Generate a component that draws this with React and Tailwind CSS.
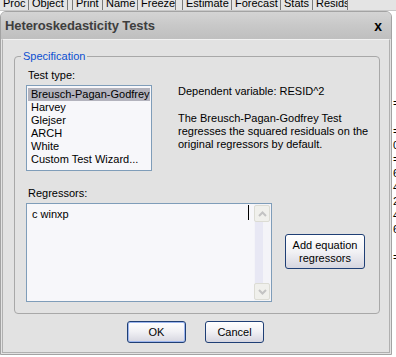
import React from "react";

const tb = [
  ["Proc", 29],
  ["Object", 39],
  ["", 5],
  ["Print", 30],
  ["Name", 35],
  ["Freeze", 38],
  ["", 7],
  ["Estimate", 49],
  ["Forecast", 49],
  ["Stats", 32],
  ["Resids", 35],
];

const items = ["Breusch-Pagan-Godfrey", "Harvey", "Glejser", "ARCH", "White", "Custom Test Wizard..."];

function Chevron({ up }) {
  return (
    <svg width="9" height="6" viewBox="0 0 9 6">
      <path
        d={up ? "M1 5 L4.5 1.5 L8 5" : "M1 1 L4.5 4.5 L8 1"}
        fill="none"
        stroke="#c3c3c3"
        strokeWidth="2"
      />
    </svg>
  );
}

export default function App() {
  return (
    <div
      className="w-[396px] h-[357px] bg-white overflow-hidden flex flex-col text-[11px] text-black"
      style={{ fontFamily: '"Liberation Sans", Arial, sans-serif' }}
    >
      {/* toolbar of background window */}
      <div className="h-[11px] shrink-0 overflow-hidden bg-[#e4e4e4] border-b border-[#c8c8c8]">
        <div className="flex -mt-[5px] h-[16px]">
          {tb.map(([t, w], i) => (
            <div
              key={i}
              className="h-[16px] leading-[16px] pl-[3px] border-r border-[#7a7a7a] whitespace-nowrap overflow-hidden"
              style={{ width: w }}
            >
              {t}
            </div>
          ))}
        </div>
      </div>

      <div className="flex flex-1">
        {/* dialog */}
        <div className="w-[392px] h-[344px] shrink-0 rounded-t-[6px] border border-[#a3a3a3] bg-[#e2e2e2] flex flex-col">
          {/* title bar */}
          <div className="h-[27px] shrink-0 rounded-t-[5px] bg-gradient-to-b from-[#d4d4d4] via-[#c8c8c8] to-[#bfbfbf] flex items-center justify-between pl-[4px] pr-[9px]">
            <span className="text-[13px] font-bold text-[#3e3e3e] tracking-[-0.1px]">Heteroskedasticity Tests</span>
            <span className="text-[14px] font-bold text-black leading-none">x</span>
          </div>
          {/* body */}
          <div className="flex-1 mx-[1px] mb-[1px] border border-[#b0b0b0] border-t-[#f2f2f2] bg-[#e2e2e2] flex flex-col">
            <div className="w-[366px] h-[258px] ml-[11px] mt-[16px] border border-[#a8a8a8] rounded-[4px] relative">
              <span className="absolute left-[6px] top-[-8px] px-[2px] bg-[#e2e2e2] text-[#0b4fd1] leading-[14px]">
                Specification
              </span>
              <div className="flex pt-[12px] pl-[11px]">
                <div className="w-[126px]">
                  <div className="h-[13px] leading-[13px] pl-[2px]">Test type:</div>
                  <div className="mt-[3px] h-[86px] border border-[#7f9db9] bg-[#f7f7fa] pt-[2px] px-[1px]">
                    {items.map((t, i) => (
                      <div
                        key={i}
                        className={
                          "h-[13px] leading-[13px] pl-[3px] whitespace-nowrap " +
                          (i === 0 ? "bg-[#b3b3bd]" : "")
                        }
                      >
                        {t}
                      </div>
                    ))}
                  </div>
                </div>
                <div className="ml-[26px] pt-[16px]">
                  <div className="h-[13px] leading-[13px]">Dependent variable: RESID^2</div>
                  <div className="mt-[14px] leading-[13px]">
                    <div>The Breusch-Pagan-Godfrey Test</div>
                    <div>regresses the squared residuals on the</div>
                    <div>original regressors by default.</div>
                  </div>
                </div>
              </div>
              <div className="pl-[11px] mt-[16px]">
                <div className="h-[13px] leading-[13px] pl-[2px]">Regressors:</div>
                <div className="flex mt-[3px]">
                  <div className="w-[246px] h-[99px] border border-[#7f9db9] bg-[#f7f7fa] flex">
                    <div className="flex-1 pl-[5px] pt-[4px] leading-[13px] relative">
                      c winxp
                      <span className="absolute right-[5px] top-[1px] w-[1px] h-[15px] bg-black" />
                    </div>
                    <div className="w-[17px] flex flex-col bg-[#f4f4f8] py-[1px] pr-[1px]">
                      <div className="h-[17px] border border-[#dcdcd4] rounded-[2px] bg-[#f0f0ec] flex items-center justify-center">
                        <Chevron up />
                      </div>
                      <div className="flex-1 flex justify-start pl-[1px]">
                        <div className="w-[8px] bg-[#e8e8f4]" />
                      </div>
                      <div className="h-[17px] border border-[#dcdcd4] rounded-[2px] bg-[#f0f0ec] flex items-center justify-center">
                        <Chevron />
                      </div>
                    </div>
                  </div>
                  <div className="ml-[13px] mt-[31px] w-[80px] h-[35px] rounded-[3px] border border-[#1f3f75] bg-gradient-to-b from-[#ffffff] via-[#f2f2f5] to-[#d6d6e0] flex flex-col items-center justify-center leading-[13px] text-center">
                    <div>Add equation</div>
                    <div>regressors</div>
                  </div>
                </div>
              </div>
            </div>
            <div className="flex justify-center gap-[19px] mt-[7px] pr-[1px]">
              <div className="w-[59px] h-[22px] rounded-[3px] border border-[#1f3f75] bg-gradient-to-b from-[#ffffff] via-[#f0f0f4] to-[#d6d6e0] shadow-[inset_0_0_0_1px_#9db6ee] flex items-center justify-center">
                OK
              </div>
              <div className="w-[59px] h-[22px] rounded-[3px] border border-[#1f3f75] bg-gradient-to-b from-[#ffffff] via-[#f0f0f4] to-[#d6d6e0] flex items-center justify-center">
                Cancel
              </div>
            </div>
          </div>
        </div>
        {/* background window sliver */}
        <div className="flex-1 overflow-hidden pl-[1px] leading-[14px] whitespace-pre">
          <div className="h-[85px]" />
          <div>=</div>
          <div> </div>
          <div>=</div>
          <div>0</div>
          <div>=</div>
          <div>6</div>
          <div>4</div>
          <div>2</div>
          <div>4</div>
          <div>6</div>
          <div> </div>
          <div>=</div>
        </div>
      </div>
    </div>
  );
}
